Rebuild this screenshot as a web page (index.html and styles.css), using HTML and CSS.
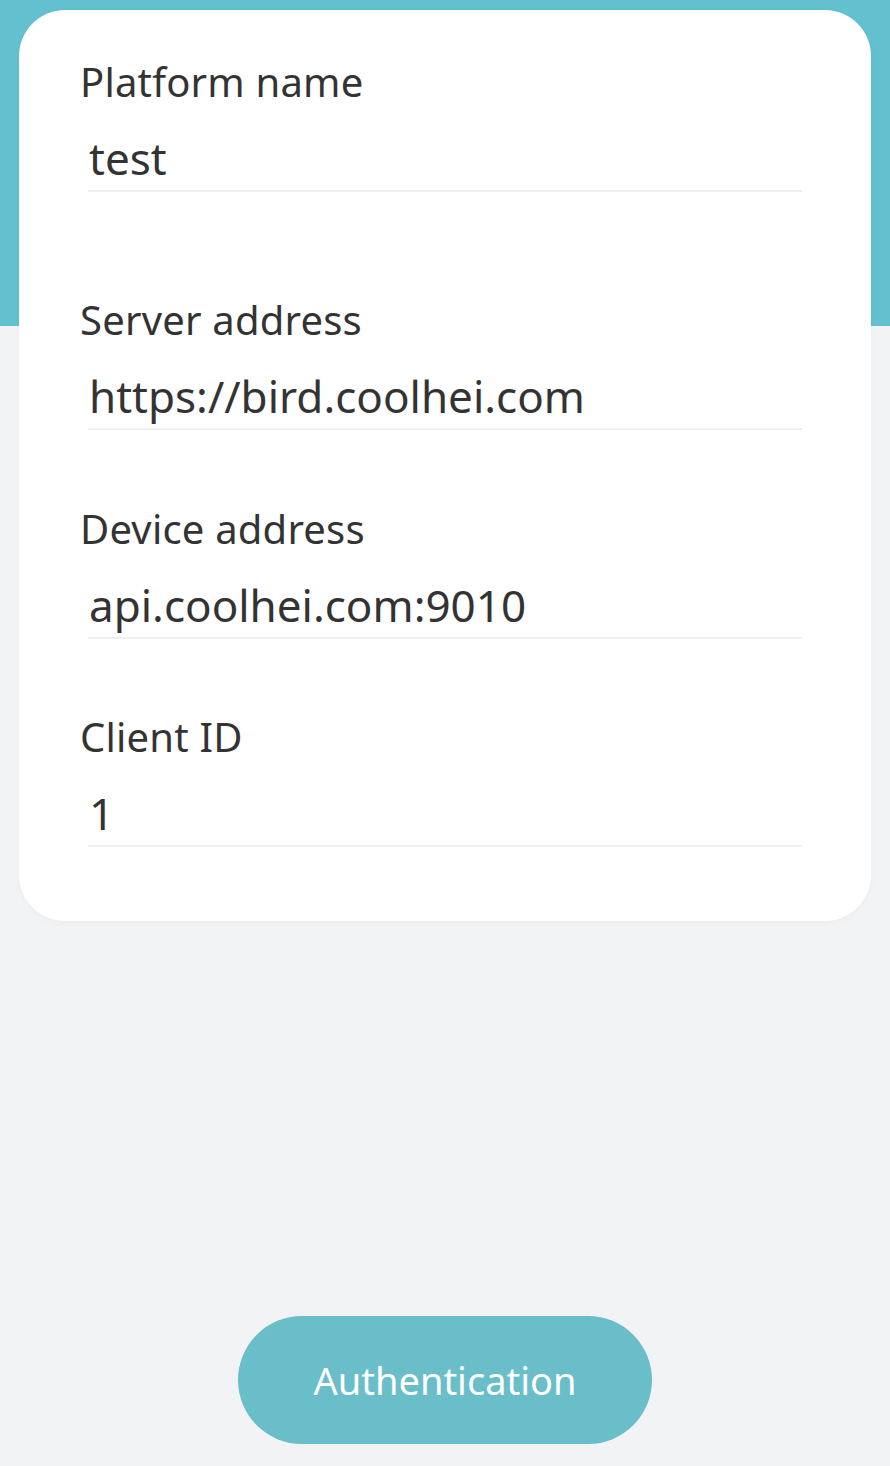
FILE: index.html
```html
<!DOCTYPE html>
<html lang="en">
<head>
<meta charset="utf-8">
<title>Platform settings</title>
<link rel="stylesheet" href="styles.css">
</head>
<body>
<div class="page">
  <div class="card">
    <div class="field field-first">
      <div class="label">Platform name</div>
      <div class="value">test</div>
    </div>
    <div class="field">
      <div class="label">Server address</div>
      <div class="value">https://bird.coolhei.com</div>
    </div>
    <div class="field">
      <div class="label">Device address</div>
      <div class="value">api.coolhei.com:9010</div>
    </div>
    <div class="field">
      <div class="label">Client ID</div>
      <div class="value">1</div>
    </div>
  </div>
  <div class="actions">
    <button class="btn" type="button">Authentication</button>
  </div>
</div>
</body>
</html>
```

FILE: styles.css
```css
html, body {
  margin: 0;
  padding: 0;
}
body {
  background: #f2f3f5;
  font-family: "Noto Sans", "Open Sans", sans-serif;
  color: #333333;
}
.page {
  min-height: 1466px;
  background: linear-gradient(#62c0cf 0, #62c0cf 326px, #f2f3f5 326px);
  padding-top: 10px;
  box-sizing: border-box;
}
.card {
  margin: 0 19px;
  background: #ffffff;
  border-radius: 46px;
  padding: 48px 69px 74px 61px;
  box-shadow: 0 2px 6px rgba(0, 0, 0, 0.03);
}
.field {
  display: flex;
  flex-direction: column;
  margin-bottom: 74.5px;
}
.field:last-child {
  margin-bottom: 0;
}
.field-first {
  margin-bottom: 104px;
}
.label {
  font-size: 40px;
  line-height: 48px;
  letter-spacing: 0.2px;
}
.value {
  margin: 24px 0 0 8px;
  font-size: 44px;
  line-height: 56px;
  padding: 0 0 4px 1px;
  border-bottom: 2px solid #efefef;
}
.actions {
  display: flex;
  justify-content: center;
  margin-top: 395px;
}
.btn {
  width: 414px;
  height: 128px;
  border: none;
  border-radius: 64px;
  background: #6abec9;
  color: #ffffff;
  font-family: "Noto Sans", "Open Sans", sans-serif;
  font-size: 38px;
  padding: 0;
}
```
